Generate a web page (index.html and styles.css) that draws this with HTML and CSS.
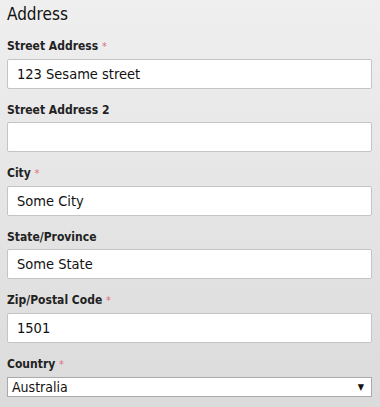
FILE: index.html
```html
<!DOCTYPE html>
<html lang="en">
<head>
    <meta charset="UTF-8">
    <title>Address</title>
    <link rel="stylesheet" href="styles.css">
</head>
<body>
    <div class="section">
        <h2>Address</h2>
        <form class="address-form">
            <div class="field">
                <label>Street Address <span class="req">*</span></label>
                <input type="text" value="123 Sesame street">
            </div>
            <div class="field">
                <label>Street Address 2</label>
                <input type="text" value="">
            </div>
            <div class="field">
                <label>City <span class="req">*</span></label>
                <input type="text" value="Some City">
            </div>
            <div class="field">
                <label>State/Province</label>
                <input type="text" value="Some State">
            </div>
            <div class="field">
                <label>Zip/Postal Code <span class="req">*</span></label>
                <input type="text" value="1501">
            </div>
            <div class="field">
                <label>Country <span class="req">*</span></label>
                <div class="select">
                    <span>Australia</span>
                    <span class="arrow">&#9660;</span>
                </div>
            </div>
        </form>
    </div>
</body>
</html>
```

FILE: styles.css
```css
html, body {
    margin: 0;
    height: 100%;
}

body {
    background: linear-gradient(to bottom, #efefef, #dbdbdb);
    font-family: 'DejaVu Sans Condensed', 'DejaVu Sans', sans-serif;
    color: #111;
    overflow: hidden;
}

.section {
    padding: 0 8px 0 7px;
}

h2 {
    font-size: 17px;
    font-weight: normal;
    margin: 0;
    padding-top: 3px;
    line-height: 22px;
}

.address-form {
    display: flex;
    flex-direction: column;
    gap: 14px;
    margin-top: 14px;
}

.field {
    display: flex;
    flex-direction: column;
    gap: 5px;
}

label {
    font-size: 12px;
    font-weight: bold;
    line-height: 14px;
    color: #222;
}

.req {
    color: #e0707a;
    font-weight: normal;
    font-size: 11px;
}

input {
    box-sizing: border-box;
    height: 30px;
    width: 100%;
    border: 1px solid #c4c4c4;
    border-radius: 2px;
    background: #fff;
    padding: 0 9px;
    font-family: inherit;
    font-size: 14.5px;
    color: #111;
}

.select {
    box-sizing: border-box;
    height: 20px;
    display: flex;
    justify-content: space-between;
    align-items: center;
    border: 1px solid #aaa;
    background: #fff;
    padding: 0 7px 0 4px;
    font-size: 14px;
}

.arrow {
    font-size: 9px;
}
```
